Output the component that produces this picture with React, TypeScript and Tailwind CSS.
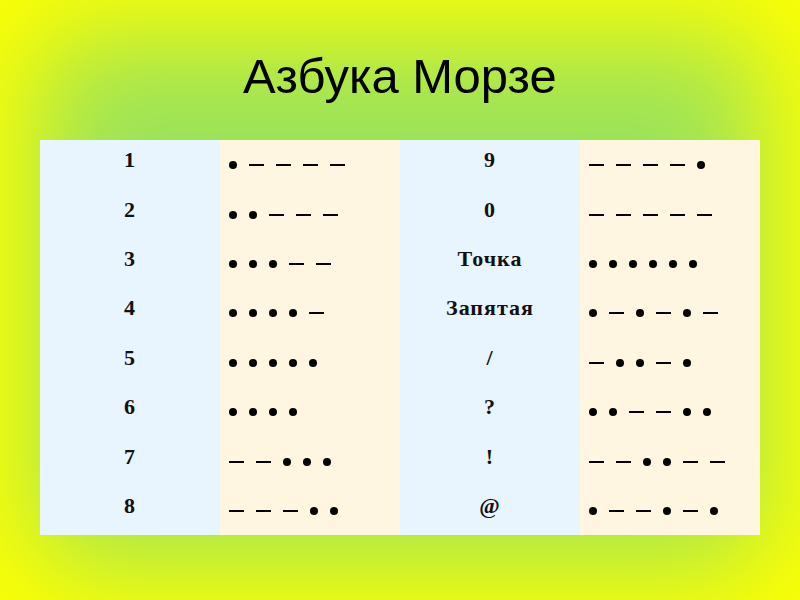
import React from "react";

type Row = { left: string; leftCode: string; right: string; rightCode: string };

const rows: Row[] = [
  { left: "1", leftCode: ".----", right: "9", rightCode: "----." },
  { left: "2", leftCode: "..---", right: "0", rightCode: "-----" },
  { left: "3", leftCode: "...--", right: "Точка", rightCode: "......" },
  { left: "4", leftCode: "....-", right: "Запятая", rightCode: ".-.-.-" },
  { left: "5", leftCode: ".....", right: "/", rightCode: "-..-." },
  { left: "6", leftCode: "....", right: "?", rightCode: "..--.." },
  { left: "7", leftCode: "--...", right: "!", rightCode: "--..--" },
  { left: "8", leftCode: "---..", right: "@", rightCode: ".--.-." },
];

function Code({ code }: { code: string }) {
  return (
    <div className="flex items-center gap-3 pl-[9px] pt-[1px]" aria-label={code}>
      {code.split("").map((c, i) =>
        c === "." ? (
          <span key={i} className="block w-2 h-2 rounded-full bg-black" />
        ) : (
          <span key={i} className="block w-[15px] h-[2px] bg-black" />
        )
      )}
    </div>
  );
}

function Label({ text }: { text: string }) {
  return (
    <div className="flex justify-center pb-[9px] font-['Liberation_Serif',serif] font-bold text-[22px] tracking-[1px] leading-none text-[#111]">
      {text}
    </div>
  );
}

export default function App() {
  return (
    <div className="w-[800px] h-[600px] bg-[#9ce35a] shadow-[inset_0_0_110px_36px_#ffff00] flex flex-col font-['Liberation_Sans',Arial,sans-serif]">
      <div className="h-[140px] flex items-center justify-center pt-[14px]">
        <h1 className="text-[48px] text-black leading-none scale-x-[1.02]">Азбука Морзе</h1>
      </div>
      <div className="mx-10 grid grid-cols-4">
        {rows.map((r) => (
          <React.Fragment key={r.left}>
            <div className="h-[49.4px] bg-[#e8f4fe] flex flex-col justify-center">
              <Label text={r.left} />
            </div>
            <div className="h-[49.4px] bg-[#fef6e0] flex flex-col justify-center">
              <Code code={r.leftCode} />
            </div>
            <div className="h-[49.4px] bg-[#e8f4fe] flex flex-col justify-center">
              <Label text={r.right} />
            </div>
            <div className="h-[49.4px] bg-[#fef6e0] flex flex-col justify-center">
              <Code code={r.rightCode} />
            </div>
          </React.Fragment>
        ))}
      </div>
    </div>
  );
}
